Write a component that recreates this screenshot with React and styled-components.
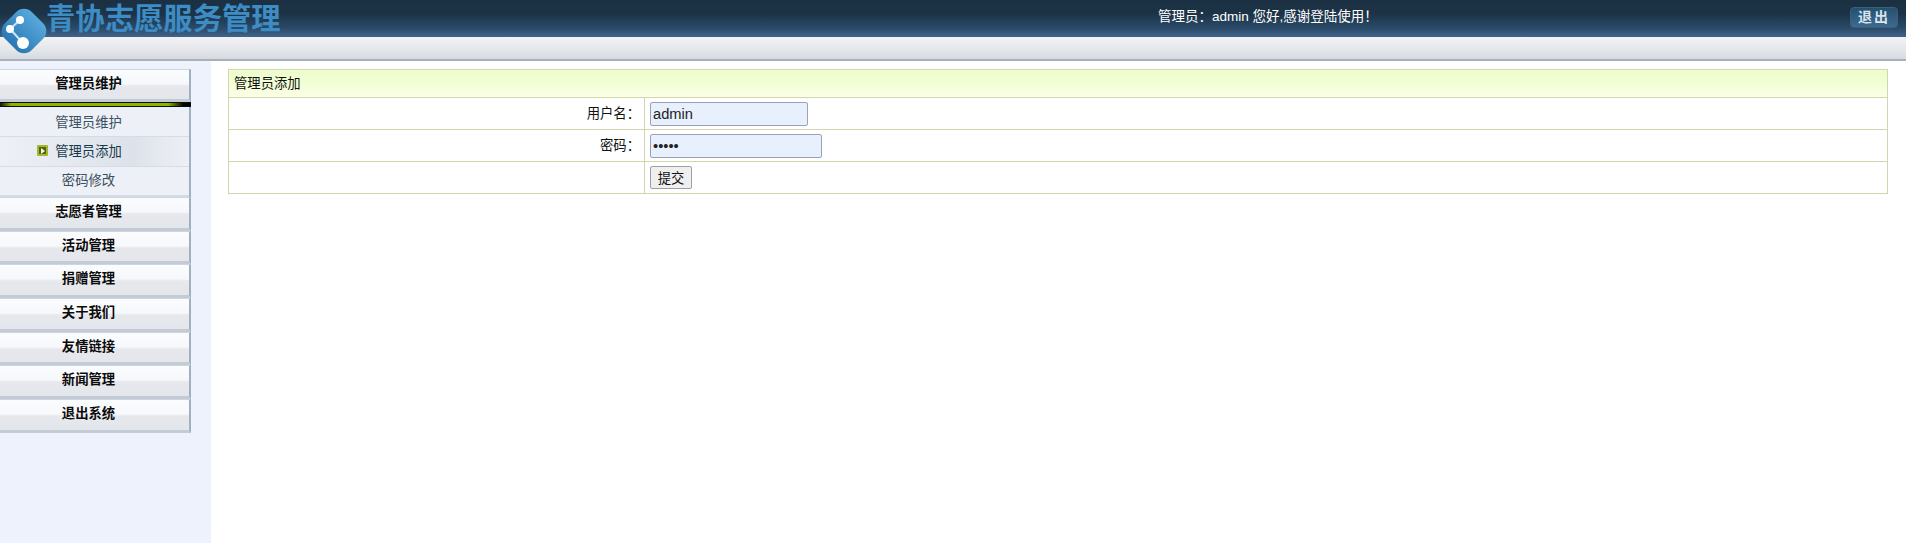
import React from "react";
import styled, { createGlobalStyle } from "styled-components";

const FONT = `"Liberation Sans", "Noto Sans CJK SC", sans-serif`;

const GlobalStyle = createGlobalStyle`
  html, body {
    margin: 0;
    padding: 0;
    background: #fff;
    font-family: ${FONT};
    font-size: 13.33px;
  }
  * { box-sizing: border-box; }
`;

const Page = styled.div`
  position: relative;
  height: 543px;
  display: flex;
  flex-direction: column;
  overflow: hidden;
`;

const Header = styled.header`
  height: 37px;
  display: flex;
  align-items: center;
  background: linear-gradient(#1b3042 0, #1c3347 14px, #2a4a68 28px, #41648c 37px);
  color: #fff;
`;

const LogoMark = styled.svg`
  position: absolute;
  left: 0;
  top: 7px;
  width: 48px;
  height: 48px;
`;

const SiteTitle = styled.h1`
  margin: 0 0 0 46px;
  width: 780px;
  font-size: 29.33px;
  line-height: 37px;
  font-weight: 700;
  color: #3d8cc4;
  white-space: nowrap;
`;

const Welcome = styled.div`
  margin-left: 332px;
  font-size: 13.5px;
  line-height: 33px;
  align-self: flex-start;
  white-space: nowrap;
`;

const ExitButton = styled.button`
  margin-left: auto;
  margin-right: 8px;
  margin-top: -3px;
  width: 48px;
  height: 21px;
  padding: 0;
  border: 1px solid #3a5f7d;
  border-radius: 4px;
  background: linear-gradient(#24506f, #3f6a90);
  color: #d8e4ee;
  font: bold 14px/18px ${FONT};
  letter-spacing: 2px;
`;

const SubBar = styled.div`
  height: 24px;
  border-bottom: 2px solid #a9b0b9;
  background: linear-gradient(#f2f2f4, #e4e6ea 13px, #d5dae0);
`;

const Body = styled.div`
  flex: 1;
  display: flex;
`;

const Sidebar = styled.nav`
  width: 211px;
  flex: none;
  padding-top: 8px;
  background: #edf2fc;
`;

const Menu = styled.div`
  width: 191px;
  display: flex;
  flex-direction: column;
`;

const MenuHead = styled.div`
  height: ${(p) => (p.$open ? "33px" : "33.7px")};
  padding: 0 12px ${(p) => (p.$open ? "4px" : "5px")} 0;
  display: flex;
  align-items: center;
  justify-content: center;
  font-weight: bold;
  color: #0b0b0b;
  border-top: 1px solid #cdd5de;
  border-right: 2px solid #9fb0bf;
  border-bottom: 3px solid #c3ccd6;
  background: linear-gradient(#fbfcfe 0, #f7f8fb 14px, #e6e8ec 16px, #e3e6eb);
`;

const OpenRule = styled.div`
  height: 5px;
  border-top: 1px solid #0d0d06;
  border-bottom: 1px solid #0c0c0c;
  background: linear-gradient(90deg, #111 0, #8fb400 6%, #8fb400 88%, #000 96%);
`;

const SubList = styled.div`
  border-right: 2px solid #9fb0bf;
  background: #edf0f6;
`;

const SubItem = styled.div`
  height: 30px;
  padding: 0 12px ${(p) => (p.$last ? "4px" : p.$active ? "2px" : "0")} 0;
  display: flex;
  align-items: center;
  justify-content: center;
  color: ${(p) => (p.$active ? "#17384a" : "#3a5060")};
  border-bottom: ${(p) => (p.$last ? "2px" : "1px")} solid #d3dde8;
  background: ${(p) =>
    p.$active ? "linear-gradient(90deg, #edf0f6 0, #dde2ea 70%, #edf0f6)" : "transparent"};
`;

const ActiveMark = styled.span`
  width: 11px;
  height: 11px;
  margin: 0 7px 0 -18px;
  display: inline-flex;
  align-items: center;
  justify-content: center;
  background: #55620f;
  border: 2px solid #a3b72c;
  border-radius: 1px;
  &::after {
    content: "";
    border-left: 4px solid #f4f6e0;
    border-top: 3px solid transparent;
    border-bottom: 3px solid transparent;
  }
`;

const Main = styled.main`
  flex: 1;
  padding: 8px 18px 0 17px;
`;

const FormTable = styled.table`
  width: 100%;
  border-collapse: collapse;
  table-layout: fixed;
  color: #111;
  td {
    border: 1px solid #d0d7ad;
    height: 32px;
    padding: 0 5px;
  }
`;

const LabelColumn = styled.col`
  width: 416px;
`;

const CaptionCell = styled.td`
  background: linear-gradient(#ebfdc9, #fbffe6);
  && {
    height: 28px;
    padding-bottom: 3px;
  }
`;

const LabelCell = styled.td`
  text-align: right;
  && {
    padding-right: 4px;
    padding-bottom: 3px;
  }
`;

const TextField = styled.input`
  display: block;
  width: ${(p) => p.$width}px;
  height: 24px;
  padding: 1px 2px;
  border: 1px solid #98a4b4;
  border-radius: 2px;
  background: #e8f0fe;
  color: #222;
  font: 14.67px ${FONT};
  outline: none;
`;

const SubmitButton = styled.button`
  display: block;
  width: 42px;
  height: 23px;
  padding: 0;
  border: 1px solid #98a0aa;
  border-radius: 2px;
  background: #efefef;
  color: #111;
  font: 13.33px ${FONT};
`;

const menus = ["志愿者管理", "活动管理", "捐赠管理", "关于我们", "友情链接", "新闻管理", "退出系统"];

const App = () => {
  return (
    <Page>
      <GlobalStyle />
      <Header>
        <SiteTitle>青协志愿服务管理</SiteTitle>
        <Welcome>管理员：admin 您好,感谢登陆使用！</Welcome>
        <ExitButton>退出</ExitButton>
      </Header>
      <LogoMark viewBox="0 0 48 48">
        <defs>
          <linearGradient id="logo" x1="0" y1="0" x2="0" y2="1">
            <stop offset="0" stopColor="#58a8dc" />
            <stop offset="1" stopColor="#2a78b4" />
          </linearGradient>
        </defs>
        <rect x="5" y="5" width="38" height="38" rx="11" transform="rotate(45 24 24)" fill="url(#logo)" />
        <path d="M10 22 L20 13 M10 22 L23 36" stroke="#cfe6f6" strokeWidth="2" />
        <circle cx="20" cy="13" r="4" fill="#fff" />
        <circle cx="10" cy="22" r="4" fill="#fff" />
        <circle cx="23" cy="36" r="6" fill="#fff" />
      </LogoMark>
      <SubBar />
      <Body>
        <Sidebar>
          <Menu>
            <MenuHead $open>管理员维护</MenuHead>
            <OpenRule />
            <SubList>
              <SubItem>管理员维护</SubItem>
              <SubItem $active>
                <ActiveMark />
                管理员添加
              </SubItem>
              <SubItem $last>密码修改</SubItem>
            </SubList>
            {menus.map((name) => (
              <MenuHead key={name}>{name}</MenuHead>
            ))}
          </Menu>
        </Sidebar>
        <Main>
          <FormTable>
            <colgroup>
              <LabelColumn />
              <col />
            </colgroup>
            <tbody>
              <tr>
                <CaptionCell colSpan={2}>管理员添加</CaptionCell>
              </tr>
              <tr>
                <LabelCell>用户名：</LabelCell>
                <td>
                  <TextField $width={158} defaultValue="admin" />
                </td>
              </tr>
              <tr>
                <LabelCell>密码：</LabelCell>
                <td>
                  <TextField $width={172} type="password" defaultValue="admin" />
                </td>
              </tr>
              <tr>
                <LabelCell />
                <td>
                  <SubmitButton>提交</SubmitButton>
                </td>
              </tr>
            </tbody>
          </FormTable>
        </Main>
      </Body>
    </Page>
  );
};

export default App;
